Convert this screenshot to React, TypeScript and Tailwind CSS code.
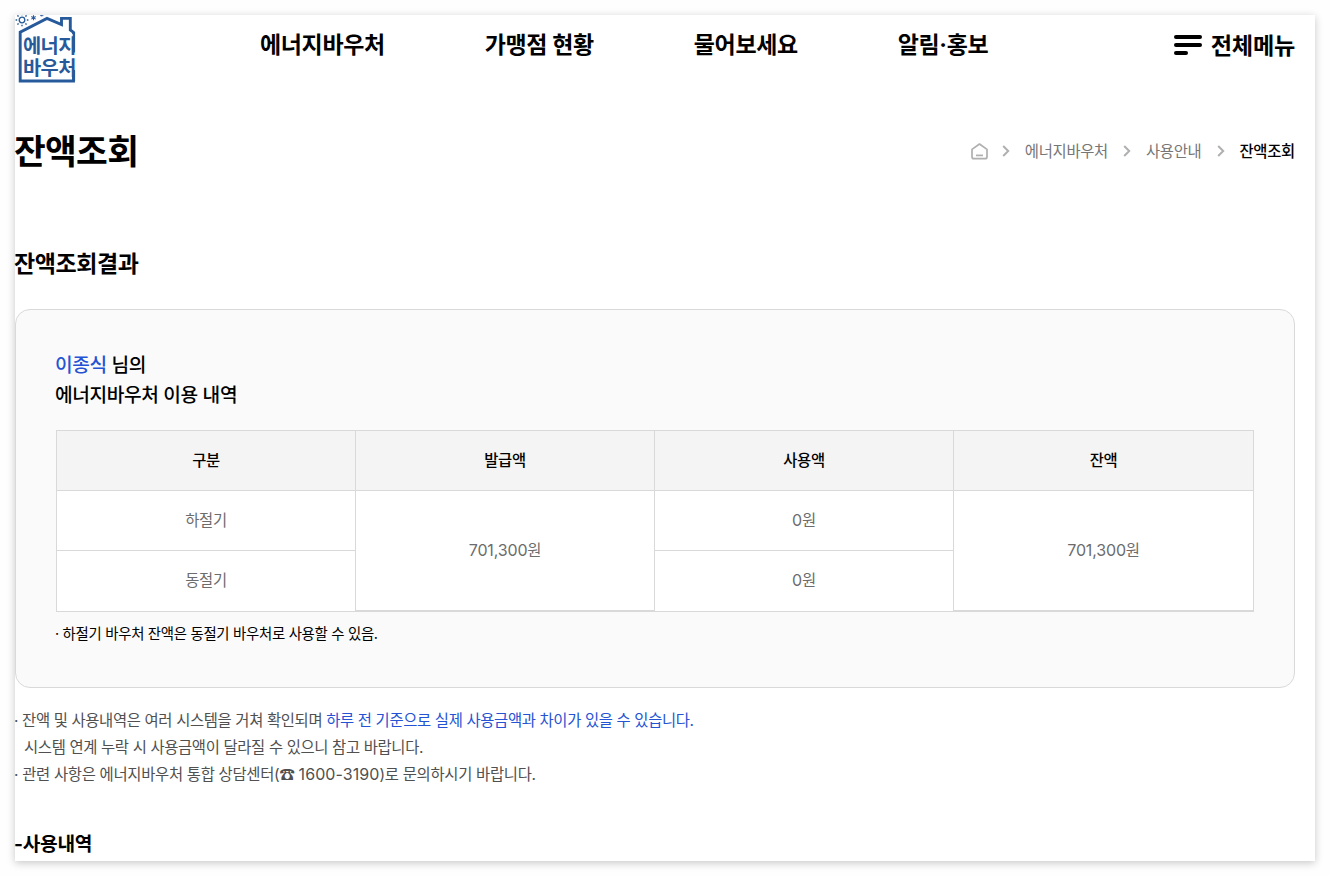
const navItems = ['에너지바우처', '가맹점 현황', '물어보세요', '알림·홍보'];
const crumbs = ['에너지바우처', '사용안내', '잔액조회'];
const columns = ['구분', '발급액', '사용액', '잔액'];

const Logo = () => (
  <svg width="61" height="69" viewBox="0 0 61 69" className="block overflow-hidden" fill="none" stroke="#275a9b">
    {/* Sun and snow */}
    <circle cx="7" cy="5" r="2.8" strokeWidth="1.3" />
    <path
      d="M7 .2V-1M7 9.8v1.4M2.2 5H.6M11.8 5h1.6M3.6 1.6 2.4.4M10.4 1.6 11.6.4M3.6 8.4 2.4 9.6M10.4 8.4l1.2 1.2"
      strokeWidth="1.4"
    />
    <path d="M18.5.3v5M16.3 1.5l4.4 2.6M20.7 1.5l-4.4 2.6" strokeWidth="1.1" />
    <path d="M25 .6h3.4M26.7 0v1.4" strokeWidth=".8" />
    {/* House */}
    <path d="M58.5 19V17.4L55.3 15V3.4H46.5V9.6L32 3.4 5.2 17.2V66H58.5V60" strokeWidth="2.9" />
    <path d="M58.9 17V37.5M58.9 55V66" strokeWidth="2.4" />
    <text
      fill="#275a9b"
      stroke="none"
      fontSize="19.8"
      fontWeight="700"
      letterSpacing="-.6"
      fontFamily="'Noto Sans CJK KR', sans-serif"
    >
      <tspan x="8" y="38">에너지</tspan>
      <tspan x="8" y="59.6">바우처</tspan>
    </text>
  </svg>
);

const Chevron = () => (
  <svg width="8" height="12" viewBox="0 0 8 12" className="block" fill="none" stroke="#b0b0b0" strokeWidth="2">
    <path d="M1.2 1l5 5-5 5" />
  </svg>
);

const HomeIcon = () => (
  <svg width="17" height="18" viewBox="0 0 17 18" fill="none" stroke="#b0b0b0" strokeWidth="1.7">
    <path d="M1 7.4 8.5 2 16 7.4V14.7a2 2 0 0 1-2 2H3a2 2 0 0 1-2-2Z" strokeLinejoin="round" />
    <path d="M5 13.4h7" />
  </svg>
);

const Header = () => (
  <header className="flex h-[69px] items-start">
    <Logo />
    <nav className="ml-[184px] flex gap-[100px] tracking-[-0.023em]">
      {navItems.map((item) => (
        <a key={item} href="#" className="whitespace-nowrap text-[23px] leading-[60px] font-bold">
          {item}
        </a>
      ))}
    </nav>
    <button className="mr-5 ml-auto flex h-[60px] items-center gap-[9px]">
      <span className="flex flex-col gap-1">
        <span className="h-1 w-7 rounded-full bg-black" />
        <span className="h-1 w-7 rounded-full bg-black" />
        <span className="h-1 w-3.5 rounded-full bg-black" />
      </span>
      <span className="pt-px text-[23.2px] leading-[60px] font-semibold">전체메뉴</span>
    </button>
  </header>
);

const Won = ({ amount }: { amount: number }) => (
  <>
    <span className="text-[16px] leading-none tracking-[-0.01em]">{amount.toLocaleString('en-US')}</span>원
  </>
);

const BalanceTable = () => (
  <table className="mt-5 w-[1198px] table-fixed border-collapse text-center text-[15.4px] leading-6 text-[#6c6c6c]">
    <colgroup>
      <col className="w-[299px]" />
      <col className="w-[299px]" />
      <col className="w-[299px]" />
      <col />
    </colgroup>
    <thead>
      <tr className="h-[60px] bg-[#f4f4f4] text-black">
        {columns.map((column) => (
          <th key={column} className="border border-[#d9d9d9] p-0 font-medium">
            {column}
          </th>
        ))}
      </tr>
    </thead>
    <tbody className="bg-white">
      <tr className="h-[60px]">
        <td className="border border-[#d9d9d9] p-0">하절기</td>
        <td rowSpan={2} className="border border-[#d9d9d9] p-0 shadow-[inset_0_-1px_0_#d9d9d9]">
          <Won amount={701300} />
        </td>
        <td className="border border-[#d9d9d9] p-0">
          <Won amount={0} />
        </td>
        <td rowSpan={2} className="border border-[#d9d9d9] p-0 shadow-[inset_0_-1px_0_#d9d9d9]">
          <Won amount={701300} />
        </td>
      </tr>
      <tr className="h-[61px]">
        <td className="border border-[#d9d9d9] p-0">동절기</td>
        <td className="border border-[#d9d9d9] p-0">
          <Won amount={0} />
        </td>
      </tr>
    </tbody>
  </table>
);

export default function App() {
  return (
    <div className="h-[876px] overflow-hidden bg-[#fefefe] p-[15px] font-['Inter','Noto_Sans_CJK_KR',sans-serif] tracking-[-0.018em] text-black">
      <div className="h-[846px] w-[1300px] bg-white shadow-[0_2px_8px_rgba(0,0,0,0.22)]">
        <Header />

        {/* Page title */}
        <div className="mt-[37px] mr-5 flex h-[60px] items-center justify-between">
          <h1 className="-ml-px pt-0.5 text-[34.5px] leading-[60px] font-bold tracking-[-0.02em]">잔액조회</h1>
          <div className="flex items-center text-[15.4px] leading-6 text-[#767676]">
            <HomeIcon />
            {crumbs.map((crumb, index) => (
              <span key={crumb} className="flex items-center">
                <span className={index === 0 ? 'mr-[15px] ml-[14px]' : 'mr-[15px] ml-[15px]'}>
                  <Chevron />
                </span>
                <span className={index === crumbs.length - 1 ? 'pt-0.5 font-medium text-black' : 'pt-0.5'}>{crumb}</span>
              </span>
            ))}
          </div>
        </div>

        <h2 className="mt-[65px] -ml-px text-[23px] leading-[36px] font-bold tracking-[-0.018em]">잔액조회결과</h2>

        {/* Result card */}
        <section className="mt-[27px] mr-5 h-[379px] rounded-[15px] border border-[#d9d9d9] bg-[#fafafa] p-10">
          <p className="-ml-px text-[19.2px] leading-[30px] font-medium tracking-[-0.02em]">
            <span className="text-[#2453d3]">이종식</span> 님의
            <br />
            에너지바우처 이용 내역
          </p>
          <BalanceTable />
          <p className="mt-[10px] -ml-px text-[14.4px] leading-6">· 하절기 바우처 잔액은 동절기 바우처로 사용할 수 있음.</p>
        </section>

        {/* Notices */}
        <ul className="mt-[19px] -ml-px text-[15.4px] leading-[27px] tracking-[-0.0225em] text-[#505050]">
          <li>
            · 잔액 및 사용내역은 여러 시스템을 거쳐 확인되며{' '}
            <span className="text-[#2453d3]">하루 전 기준으로 실제 사용금액과 차이가 있을 수 있습니다.</span>
          </li>
          <li className="pl-[10px]">시스템 연계 누락 시 사용금액이 달라질 수 있으니 참고 바랍니다.</li>
          <li className="tracking-[-0.019em]">
            · 관련 사항은 에너지바우처 통합 상담센터(
            <span className="font-['Noto_Sans_CJK_KR'] leading-none">☎</span>{' '}
            <span className="text-[16px] leading-none tracking-[0.005em]">1600-3190</span>)로 문의하시기 바랍니다.
          </li>
        </ul>

        <h3 className="mt-[41px] -ml-px text-[19.2px] leading-[30px] font-bold">-사용내역</h3>
      </div>
    </div>
  );
}
